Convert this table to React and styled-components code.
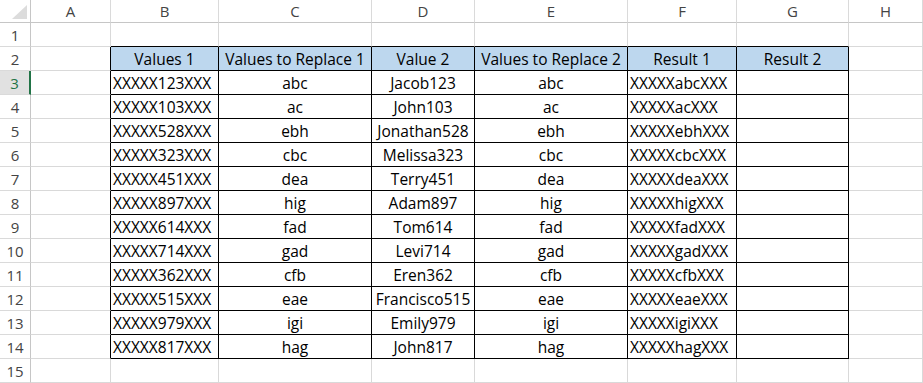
import React from 'react';
import styled, { createGlobalStyle } from 'styled-components';

const GlobalStyle = createGlobalStyle`
  html, body {
    margin: 0;
    padding: 0;
    background: #ffffff;
    overflow: hidden;
  }
  body {
    font-family: "Open Sans", "Liberation Sans", Arial, sans-serif;
  }
`;

const COLS = ['A', 'B', 'C', 'D', 'E', 'F', 'G', 'H'];
// row header, A..G, H takes what is left
const WIDTHS = '31px 80px 108px 153px 103px 153px 109px 112px 1fr';

const codes = ['123', '103', '528', '323', '451', '897', '614', '714', '362', '515', '979', '817'];
const repl = ['abc', 'ac', 'ebh', 'cbc', 'dea', 'hig', 'fad', 'gad', 'cfb', 'eae', 'igi', 'hag'];
const names = ['Jacob', 'John', 'Jonathan', 'Melissa', 'Terry', 'Adam', 'Tom', 'Levi', 'Eren', 'Francisco', 'Emily', 'John'];

const rows = codes.map((c, i) => [
  `XXXXX${c}XXX`,
  repl[i],
  names[i] + c,
  repl[i],
  `XXXXX${repl[i]}XXX`,
  '',
]);

const headers = ['Values 1', 'Values to Replace 1', 'Value 2', 'Values to Replace 2', 'Result 1', 'Result 2'];

const Sheet = styled.div`
  display: grid;
  grid-template-columns: ${WIDTHS};
  grid-template-rows: 23px repeat(15, 24px);
  width: 923px;
  height: 383px;
  font-size: 15.5px;
  color: #000;
`;

const Corner = styled.div`
  box-sizing: border-box;
  border-right: 1px solid #c6c6c6;
  border-bottom: 1px solid #c6c6c6;
  display: flex;
  align-items: flex-end;
  justify-content: flex-end;
  padding: 0 3px 3px 0;
`;

const Triangle = styled.div`
  width: 0;
  height: 0;
  border-left: 15px solid transparent;
  border-bottom: 14px solid #dcdcdc;
`;

const ColHead = styled.div`
  box-sizing: border-box;
  border-right: 1px solid #dadada;
  border-bottom: 1px solid #c6c6c6;
  display: flex;
  align-items: center;
  justify-content: center;
  color: #444;
  font-size: 15px;
`;

const RowHead = styled.div`
  box-sizing: border-box;
  border-bottom: 1px solid #dadada;
  border-right: ${(p) => (p.$active ? '2px solid #217346' : '1px solid #c6c6c6')};
  background: ${(p) => (p.$active ? '#e1e1e1' : '#ffffff')};
  color: ${(p) => (p.$active ? '#217346' : '#444')};
  display: flex;
  align-items: flex-end;
  justify-content: center;
  font-size: 15px;
  padding-bottom: 1px;
`;

const Cell = styled.div`
  box-sizing: border-box;
  border-right: 1px solid ${(p) => (p.$edgeRight ? '#000' : '#d9d9d9')};
  border-bottom: 1px solid ${(p) => (p.$edgeBottom ? '#000' : '#d9d9d9')};
  background: ${(p) => (p.$fill ? '#bdd7ee' : 'transparent')};
  display: flex;
  align-items: flex-end;
  justify-content: ${(p) => (p.$left ? 'flex-start' : 'center')};
  padding: 0 2px 0 2px;
  white-space: nowrap;
`;

function SheetRow({ n, values, header }) {
  // n = row number; values = B..G, or nothing for an empty row
  const inTable = n >= 2 && n <= 14;
  return (
    <>
      <RowHead $active={n === 3}>{n}</RowHead>
      {COLS.map((col, ci) => {
        const tableCol = ci >= 1 && ci <= 6;
        const edgeRight = inTable && ci <= 6;
        const edgeBottom = tableCol && n <= 14;
        const v = values && tableCol ? values[ci - 1] : '';
        const left = !header && (ci === 1 || ci === 5);
        return (
          <Cell
            key={col}
            $edgeRight={edgeRight}
            $edgeBottom={edgeBottom}
            $fill={header && tableCol}
            $left={left}
          >
            {v}
          </Cell>
        );
      })}
    </>
  );
}

export default function App() {
  return (
    <>
      <GlobalStyle />
      <Sheet>
        <Corner>
          <Triangle />
        </Corner>
        {COLS.map((c) => (
          <ColHead key={c}>{c}</ColHead>
        ))}
        <SheetRow n={1} />
        <SheetRow n={2} values={headers} header />
        {rows.map((r, i) => (
          <SheetRow key={i} n={i + 3} values={r} />
        ))}
        <SheetRow n={15} />
      </Sheet>
    </>
  );
}
